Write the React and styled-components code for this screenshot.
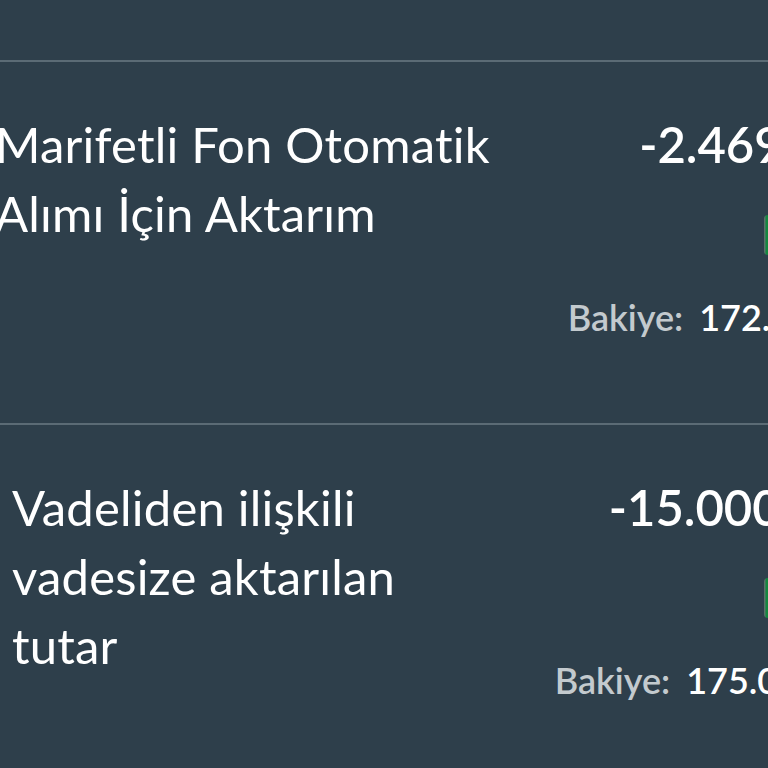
import React from "react";
import styled, { createGlobalStyle } from "styled-components";

const Global = createGlobalStyle`
  html, body {
    margin: 0;
    padding: 0;
    background: #2e3f4b;
    overflow: hidden;
  }
  #root {
    width: 768px;
    height: 768px;
    overflow: hidden;
  }
`;

const Page = styled.div`
  width: 768px;
  height: 768px;
  overflow: hidden;
  background: #2e3f4b;
  font-family: Lato, "Noto Sans", sans-serif;
  color: #ffffff;
  padding-top: 60px;
  box-sizing: border-box;
`;

const Row = styled.div`
  display: flex;
  justify-content: space-between;
  align-items: flex-start;
  width: ${(p) => p.$width}px;
  margin-left: ${(p) => p.$shift}px;
  padding: 0 0 0 12px;
  height: ${(p) => p.$height}px;
  border-top: 2px solid #5b6b75;
  box-sizing: border-box;
`;

const Title = styled.div`
  font-size: 49px;
  line-height: 69px;
  font-weight: 400;
  letter-spacing: 0.2px;
  padding-top: 48px;
  white-space: nowrap;
  flex: none;
`;

const Side = styled.div`
  display: flex;
  flex-direction: column;
  align-items: flex-end;
  padding-top: 48px;
`;

const Amount = styled.div`
  font-size: 49px;
  line-height: 69px;
  font-weight: 600;
  white-space: nowrap;
`;

const Indicator = styled.div`
  width: ${(p) => p.$width}px;
  height: 40px;
  margin-top: 36px;
  border-radius: 4px;
  background: linear-gradient(90deg, #5c6f6a 0, #5c6f6a 1px, #14883f 2px, #14883f 100%);
`;

const Balance = styled.div`
  margin-top: 40px;
  margin-right: ${(p) => p.$trail}px;
  font-size: 36px;
  line-height: 44px;
  white-space: nowrap;
  display: flex;
  gap: 16px;
`;

const Label = styled.span`
  color: #c3cace;
  font-weight: 600;
`;

const Value = styled.span`
  color: #ffffff;
  font-weight: 600;
`;

const rows = [
  {
    title: ["Marifetli Fon Otomatik", "Alımı İçin Aktarım"],
    amount: "-2.469,00 TL",
    balance: "172.530,45 TL",
    shift: -17,
    width: 933,
    height: 363,
    trail: -15,
  },
  {
    title: ["Vadeliden ilişkili", "vadesize aktarılan", "tutar"],
    amount: "-15.000,00 TL",
    balance: "175.000,45 TL",
    shift: 0,
    width: 914,
    height: 400,
    trail: -4,
  },
];

export default function App() {
  return (
    <Page>
      <Global />
      {rows.map((r, i) => (
        <Row key={i} $shift={r.shift} $width={r.width} $height={r.height}>
          <Title>
            {r.title.map((t, j) => (
              <div key={j}>{t}</div>
            ))}
          </Title>
          <Side>
            <Amount>{r.amount}</Amount>
            <Indicator $width={r.width + r.shift - 764} />
            <Balance $trail={r.trail}>
              <Label>Bakiye:</Label>
              <Value>{r.balance}</Value>
            </Balance>
          </Side>
        </Row>
      ))}
    </Page>
  );
}
